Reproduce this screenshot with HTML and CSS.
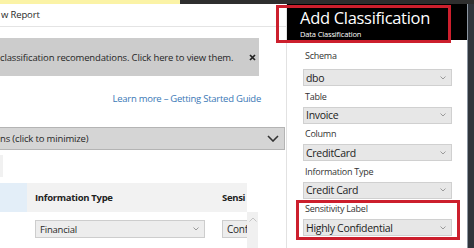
FILE: index.html
```html
<!DOCTYPE html>
<html lang="en">
<head>
    <meta charset="UTF-8">
    <meta name="viewport" content="width=device-width, initial-scale=1.0">
    <title>Add Classification</title>
    <link rel="stylesheet" href="styles.css">
</head>
<body>
    <div class="top-strip">
        <div class="top-yellow"></div>
        <div class="top-dark"></div>
    </div>
    <div class="main">
        <div class="left">
            <div class="report-bar">w Report</div>
            <div class="banner">
                <span>classification recomendations. Click here to view them.</span>
                <svg class="close" width="7" height="7" viewBox="0 0 7 7">
                    <path d="M1 1 L6 6 M6 1 L1 6" stroke="#222" stroke-width="1.7" fill="none"/>
                </svg>
            </div>
            <div class="learn">
                <a href="#">Learn more &ndash; Getting Started Guide</a>
            </div>
            <div class="min-bar">
                <span>ns (click to minimize)</span>
                <svg width="12" height="7" viewBox="0 0 12 7">
                    <polyline points="1,1 6,6 11,1" stroke="#333" stroke-width="1.6" fill="none"/>
                </svg>
            </div>
            <div class="grid-area">
                <div class="sliver"></div>
                <div class="grid-head">
                    <div class="sel-cell"></div>
                    <div class="th th-type">Information Type</div>
                    <div class="th th-label">Sensi</div>
                </div>
                <div class="grid-row">
                    <div class="row-gap"></div>
                    <div class="cell-select">
                        <span>Financial</span>
                        <svg width="6" height="4" viewBox="0 0 6 4">
                            <polyline points="0.5,0.5 3,3 5.5,0.5" stroke="#999" stroke-width="1" fill="none"/>
                        </svg>
                    </div>
                    <div class="cell-conf">Conf</div>
                    <div class="scroll">
                        <svg width="8" height="5" viewBox="0 0 8 5">
                            <polyline points="0.5,4.5 4,1 7.5,4.5" stroke="#c4c4c4" stroke-width="1" fill="none"/>
                        </svg>
                    </div>
                </div>
            </div>
        </div>

        <div class="panel">
            <div class="panel-head">
                <div class="panel-title">Add Classification</div>
                <div class="panel-sub">Data Classification</div>
            </div>
            <div class="fields">
                <div class="field">
                    <div class="field-label">Schema</div>
                    <div class="dropdown"><span>dbo</span><svg width="6" height="4" viewBox="0 0 6 4"><polyline points="0.5,0.5 3,3 5.5,0.5" stroke="#9a9a9a" stroke-width="1" fill="none"/></svg></div>
                </div>
                <div class="field">
                    <div class="field-label">Table</div>
                    <div class="dropdown"><span>Invoice</span><svg width="6" height="4" viewBox="0 0 6 4"><polyline points="0.5,0.5 3,3 5.5,0.5" stroke="#9a9a9a" stroke-width="1" fill="none"/></svg></div>
                </div>
                <div class="field">
                    <div class="field-label">Column</div>
                    <div class="dropdown"><span>CreditCard</span><svg width="6" height="4" viewBox="0 0 6 4"><polyline points="0.5,0.5 3,3 5.5,0.5" stroke="#9a9a9a" stroke-width="1" fill="none"/></svg></div>
                </div>
                <div class="field">
                    <div class="field-label">Information Type</div>
                    <div class="dropdown"><span>Credit Card</span><svg width="6" height="4" viewBox="0 0 6 4"><polyline points="0.5,0.5 3,3 5.5,0.5" stroke="#9a9a9a" stroke-width="1" fill="none"/></svg></div>
                </div>
                <div class="field marked">
                    <div class="field-label">Sensitivity Label</div>
                    <div class="dropdown"><span>Highly Confidential</span><svg width="6" height="4" viewBox="0 0 6 4"><polyline points="0.5,0.5 3,3 5.5,0.5" stroke="#9a9a9a" stroke-width="1" fill="none"/></svg></div>
                </div>
            </div>
        </div>

        <div class="edge"></div>
    </div>

    <!-- red annotation round the panel title -->
    <div class="note-box"></div>
</body>
</html>
```

FILE: styles.css
```css
body {
    font-family: "Open Sans", "Noto Sans", sans-serif;
    margin: 0;
    padding: 0;
    width: 474px;
    height: 248px;
    overflow: hidden;
    background-color: #fff;
    display: flex;
    flex-direction: column;
    position: relative;
    color: #2a2a2a;
}
.top-strip {
    display: flex;
    height: 4px;
}
.top-yellow {
    width: 180px;
    background-color: #fbf3a6;
}
.top-dark {
    flex: 1;
    background-color: #2e2e2e;
}
.main {
    flex: 1;
    display: flex;
}
.left {
    width: 286px;
    border-right: 1px solid #e2e2e2;
    display: flex;
    flex-direction: column;
}
.report-bar {
    height: 22px;
    line-height: 22px;
    border-bottom: 1px solid #e4e4e4;
    font-size: 9.5px;
    letter-spacing: -0.15px;
    padding-left: 1px;
}
.banner {
    margin-top: 11px;
    width: 259px;
    height: 38px;
    background-color: #cccccc;
    display: flex;
    align-items: center;
    justify-content: space-between;
    font-size: 9.5px;
    letter-spacing: -0.15px;
    color: #262626;
}
.banner .close {
    margin-right: 3px;
}
.learn {
    height: 51px;
    box-sizing: border-box;
    padding-top: 16px;
    padding-right: 25px;
    text-align: right;
    font-size: 9.5px;
    line-height: 13px;
    letter-spacing: -0.25px;
}
.learn a {
    color: #3b78b6;
    text-decoration: none;
}
.min-bar {
    width: 285px;
    height: 23px;
    box-sizing: border-box;
    background-color: #d5d5d5;
    border: 1px solid #b4b4b4;
    border-left: none;
    display: flex;
    align-items: center;
    justify-content: space-between;
    padding-right: 5px;
    font-size: 9.5px;
    letter-spacing: -0.15px;
    color: #262626;
}
.grid-area {
    flex: 1;
    display: flex;
    flex-direction: column;
}
.sliver {
    width: 3px;
    height: 22px;
    margin-top: 5px;
    margin-bottom: 6px;
    background-color: #f1f1f1;
}
.grid-head {
    width: 247px;
    height: 29px;
    display: flex;
    background-color: #f2f2f2;
}
.sel-cell {
    width: 27px;
    background-color: #e3eef8;
}
.th {
    font-size: 9.5px;
    font-weight: bold;
    letter-spacing: -0.3px;
    line-height: 29px;
    color: #222;
    white-space: nowrap;
}
.th-type {
    width: 187px;
    padding-left: 8px;
}
.th-label {
    width: 25px;
}
.grid-row {
    flex: 1;
    display: flex;
}
.row-gap {
    width: 35px;
}
.cell-select {
    width: 170px;
    height: 18px;
    margin-top: 8px;
    box-sizing: border-box;
    border: 1px solid #cdcdcd;
    background-color: #ededed;
    display: flex;
    align-items: center;
    justify-content: space-between;
    padding: 0 5px 0 4px;
    font-size: 9.5px;
    letter-spacing: -0.2px;
}
.cell-conf {
    width: 25px;
    height: 18px;
    margin-top: 8px;
    margin-left: 17px;
    box-sizing: border-box;
    border: 1px solid #cdcdcd;
    border-right: none;
    background-color: #ededed;
    padding-left: 4px;
    font-size: 10px;
    line-height: 16px;
    letter-spacing: -0.25px;
    white-space: nowrap;
}
.scroll {
    width: 11px;
    background-color: #f0f0f0;
    display: flex;
    justify-content: center;
    padding-top: 5px;
    box-sizing: border-box;
}
.panel {
    width: 180px;
    display: flex;
    flex-direction: column;
}
.panel-head {
    height: 36px;
    box-sizing: border-box;
    background-color: #000;
    color: #fff;
    padding: 2.5px 0 0 13px;
}
.panel-title {
    font-size: 16.5px;
    line-height: 22px;
    letter-spacing: -0.3px;
}
.panel-sub {
    font-size: 7.5px;
    line-height: 10px;
    letter-spacing: -0.15px;
}
.fields {
    padding: 9px 15px 0 16px;
}
.field {
    margin-bottom: 3.5px;
}
.field-label {
    font-size: 9px;
    line-height: 14px;
    letter-spacing: -0.25px;
    color: #333;
    padding-left: 2px;
    margin-bottom: 3px;
}
.field:first-child .field-label {
    margin-bottom: 6px;
}
.dropdown {
    height: 17px;
    box-sizing: border-box;
    border: 1px solid #d0d0d0;
    background-color: #e7e7e7;
    display: flex;
    align-items: center;
    justify-content: space-between;
    padding: 0 5px 0 2px;
    font-size: 10.5px;
    letter-spacing: -0.3px;
    color: #1c1c1c;
}
.marked {
    position: relative;
}
.marked::after {
    content: "";
    position: absolute;
    top: -2px;
    left: -7px;
    right: -8px;
    bottom: -4px;
    border: 3px solid #cc1f2d;
}
.edge {
    flex: 1;
    background-color: #30353c;
    border-left: 1px solid #8c96a2;
}
.note-box {
    position: absolute;
    left: 276px;
    top: 5px;
    width: 175px;
    height: 38px;
    box-sizing: border-box;
    border: 3px solid #cc1f2d;
}
```
